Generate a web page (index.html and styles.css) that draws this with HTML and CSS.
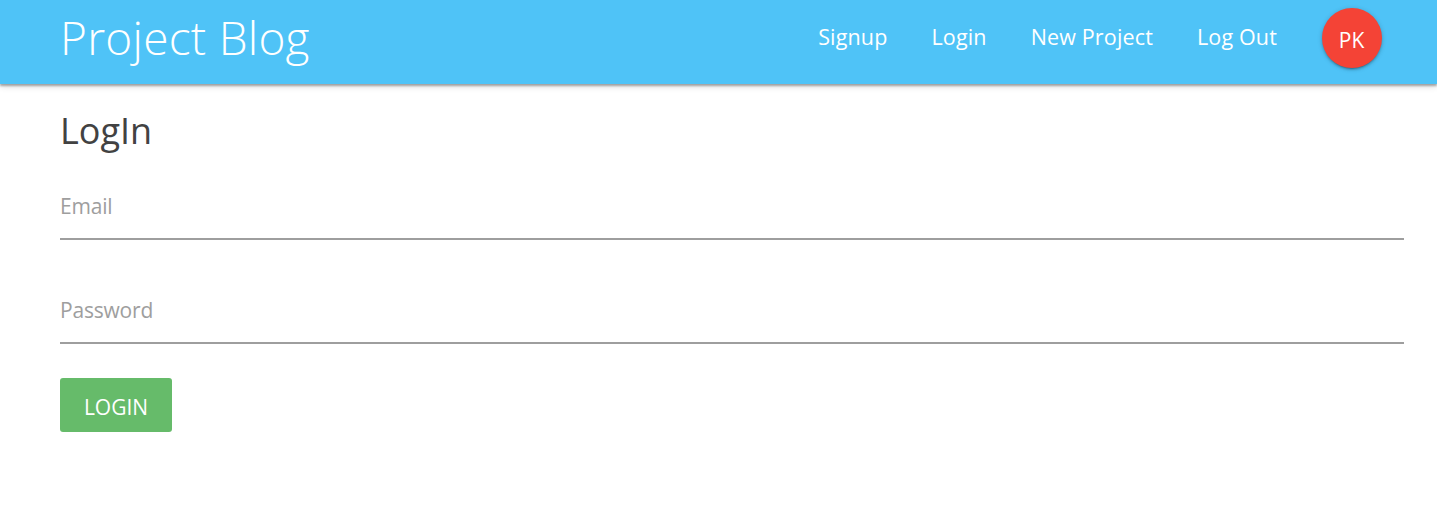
FILE: index.html
```html
<!DOCTYPE html>
<html>
<head>
    <title>Project Blog</title>
    <link rel="stylesheet" href="styles.css">
</head>
<body>
    <nav class="navbar">
        <a class="brand" href="#">Project Blog</a>
        <ul class="nav-links">
            <li><a href="#">Signup</a></li>
            <li><a href="#">Login</a></li>
            <li><a href="#">New Project</a></li>
            <li><a href="#">Log Out</a></li>
            <li><a class="avatar" href="#">PK</a></li>
        </ul>
    </nav>

    <!-- Login form -->
    <div class="container">
        <h4 class="page-title">LogIn</h4>
        <form>
            <div class="field">
                <input type="email" placeholder="Email">
            </div>
            <div class="field">
                <input type="password" placeholder="Password">
            </div>
            <button class="btn" type="button">LOGIN</button>
        </form>
    </div>
</body>
</html>
```

FILE: styles.css
```css
body {
    font-family: "Open Sans", "Noto Sans", sans-serif;
    margin: 0;
    background-color: #fff;
    color: #424242;
}
a {
    color: #fff;
    text-decoration: none;
}
/* Top bar */
.navbar {
    display: flex;
    align-items: center;
    justify-content: space-between;
    box-sizing: border-box;
    height: 84px;
    padding: 0 55px 8px 60px;
    background-color: #4fc3f7;
    box-shadow: 0 2px 2px 0 rgba(0, 0, 0, 0.3), 0 3px 6px 0 rgba(0, 0, 0, 0.12);
}
.brand {
    padding-bottom: 2px;
    font-size: 46px;
    font-weight: 300;
    letter-spacing: 0.25px;
}
.nav-links {
    display: flex;
    align-items: center;
    gap: 44px;
    list-style: none;
    margin: 0;
    padding: 0;
    font-size: 21.5px;
    letter-spacing: 0.15px;
}
.nav-links li:last-child {
    margin-left: 1px;
}
.nav-links li:not(:last-child) {
    padding-bottom: 4px;
}
.avatar {
    display: flex;
    align-items: center;
    justify-content: center;
    box-sizing: border-box;
    width: 60px;
    height: 60px;
    padding: 3px 1px 0 0;
    border-radius: 50%;
    font-size: 21px;
    letter-spacing: 0;
    background-color: #f44336;
    box-shadow: 0 2px 2px 0 rgba(0, 0, 0, 0.14), 0 3px 1px -2px rgba(0, 0, 0, 0.2), 0 1px 5px 0 rgba(0, 0, 0, 0.2);
}
/* Form */
.container {
    padding: 0 33px 0 60px;
}
.page-title {
    margin: 0;
    padding-top: 24px;
    font-size: 36px;
    font-weight: 400;
    line-height: 46px;
}
.field {
    margin-top: 26px;
}
.field + .field {
    margin-top: 44px;
}
input {
    display: block;
    width: 100%;
    height: 60px;
    box-sizing: border-box;
    padding: 0 0 7px;
    border: none;
    border-bottom: 2px solid #9e9e9e;
    outline: none;
    font-family: inherit;
    font-size: 21px;
    letter-spacing: -0.2px;
    background: transparent;
}
input::placeholder {
    color: #9e9e9e;
    opacity: 1;
}
.btn {
    display: block;
    width: 112px;
    height: 54px;
    margin-top: 34px;
    padding: 3px 0 0;
    border: none;
    border-radius: 3px;
    font-family: inherit;
    font-size: 21px;
    color: #fff;
    background-color: #66bb6a;
}
```
